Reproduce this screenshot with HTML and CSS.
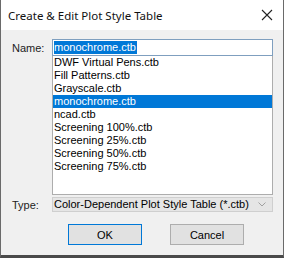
FILE: index.html
```html
<!DOCTYPE html>
<html lang="en">
<head>
    <meta charset="UTF-8">
    <title>Create &amp; Edit Plot Style Table</title>
    <link rel="stylesheet" href="styles.css">
</head>
<body>
    <div class="window">
        <div class="titlebar">
            <span class="title">Create &amp; Edit Plot Style Table</span>
            <svg class="close" width="12" height="12" viewBox="0 0 12 12">
                <path d="M1 1 L11 11 M11 1 L1 11" stroke="#222" stroke-width="1.1" fill="none"/>
            </svg>
        </div>

        <div class="content">
            <div class="row name-row">
                <label class="label">Name:</label>
                <div class="field">
                    <div class="name-input"><span class="sel">monochrome.ctb</span></div>
                    <ul class="list">
                        <li>DWF Virtual Pens.ctb</li>
                        <li>Fill Patterns.ctb</li>
                        <li>Grayscale.ctb</li>
                        <li class="active">monochrome.ctb</li>
                        <li>ncad.ctb</li>
                        <li>Screening 100%.ctb</li>
                        <li>Screening 25%.ctb</li>
                        <li>Screening 50%.ctb</li>
                        <li>Screening 75%.ctb</li>
                    </ul>
                </div>
            </div>

            <div class="row type-row">
                <label class="label">Type:</label>
                <div class="combo">
                    <span>Color-Dependent Plot Style Table (*.ctb)</span>
                    <svg class="chevron" width="8" height="5" viewBox="0 0 8 5">
                        <path d="M0.5 0.5 L4 4 L7.5 0.5" stroke="#a0a0a0" stroke-width="1" fill="none"/>
                    </svg>
                </div>
            </div>

            <div class="buttons">
                <button class="btn default">OK</button>
                <button class="btn">Cancel</button>
            </div>
        </div>
    </div>
</body>
</html>
```

FILE: styles.css
```css
body {
    margin: 0;
    font-family: "Liberation Sans", Arial, sans-serif;
    font-size: 11px;
    color: #000;
}
.window {
    width: 284px;
    height: 258px;
    box-sizing: border-box;
    background-color: #f0f0f0;
    border-left: 1px solid #6a6a6a;
    border-right: 1px solid #6a6a6a;
    border-bottom: 3px solid #4a4a4a;
}
.titlebar {
    height: 30px;
    background-color: #fff;
    display: flex;
    align-items: center;
    justify-content: space-between;
    padding: 0 10px 0 7px;
}
.title {
    font-family: "Noto Sans", sans-serif;
    font-size: 11.5px;
    color: #111;
}
.close {
    display: block;
}
.content {
    padding: 9px 10px 0 11px;
}
.row {
    display: flex;
}
.label {
    width: 40px;
    flex: none;
    color: #222;
}
.name-row .label {
    padding-top: 3px;
}
.field {
    width: 221px;
}
.name-input {
    height: 15px;
    border: 1px solid #7f9fbf;
    background-color: #fff;
    padding-left: 1px;
    line-height: 15px;
}
.sel {
    display: inline-block;
    background-color: #0078d7;
    color: #fff;
    line-height: 13px;
    padding-right: 1px;
}
.list {
    list-style: none;
    margin: 0;
    padding: 0;
    height: 138px;
    background-color: #fff;
    border: 1px solid #adadad;
    border-top: none;
}
.list li {
    height: 13px;
    line-height: 13px;
    padding-left: 1px;
    white-space: nowrap;
}
.list li.active {
    background-color: #0078d7;
    color: #fff;
}
.type-row {
    margin-top: 2px;
    align-items: center;
}
.combo {
    width: 221px;
    height: 15px;
    box-sizing: border-box;
    background-color: #e5e5e5;
    border: 1px solid #cfcfcf;
    display: flex;
    align-items: center;
    justify-content: space-between;
    padding: 0 6px 0 1px;
    line-height: 13px;
}
.buttons {
    display: flex;
    gap: 28px;
    margin-top: 12px;
    padding-left: 56px;
}
.btn {
    width: 74px;
    height: 21px;
    font-family: "Liberation Sans", Arial, sans-serif;
    font-size: 11px;
    background-color: #e1e1e1;
    border: 1px solid #adadad;
    padding: 0;
    color: #000;
}
.btn.default {
    border-color: #0078d7;
}
```
